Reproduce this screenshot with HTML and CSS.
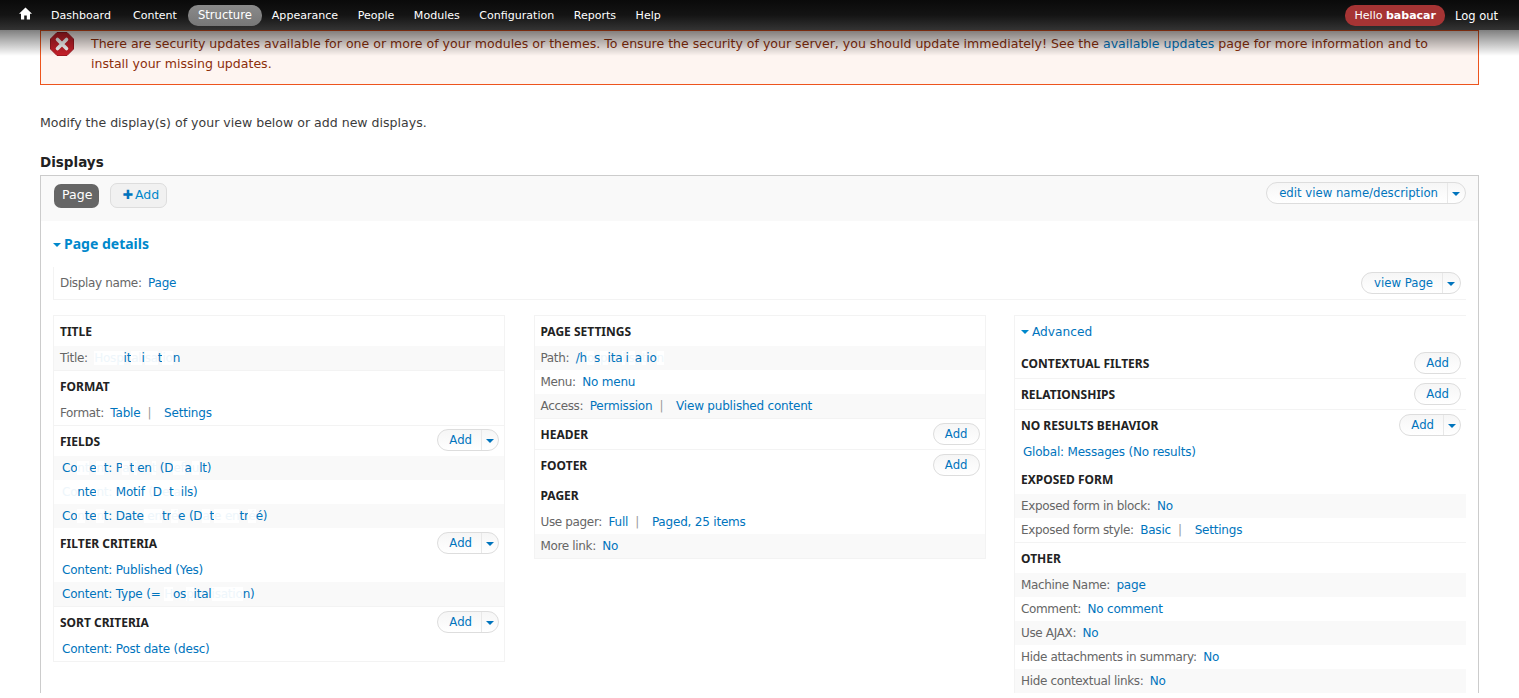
FILE: index.html
```html
<!DOCTYPE html>
<html>
<head>
  <title>Edit view</title>
  <link rel="stylesheet" href="styles.css">
</head>
<body>
<div class="toolbar">
  <a class="home" href="#"><svg width="13" height="13" viewBox="0 0 13 13"><path d="M6.5 .5 L13 6.8 H11 V12.5 H7.8 V8.5 H5.2 V12.5 H2 V6.8 H0 Z" fill="#fff"/></svg></a>
  <a class="first" href="#">Dashboard</a>
  <a href="#">Content</a>
  <a class="active" href="#">Structure</a>
  <a href="#">Appearance</a>
  <a href="#">People</a>
  <a href="#">Modules</a>
  <a href="#">Configuration</a>
  <a href="#">Reports</a>
  <a href="#">Help</a>
  <a class="hello" href="#">Hello <b>babacar</b></a>
  <a class="logout" href="#">Log out</a>
</div>

<div class="message">
  <svg class="message-icon" width="24" height="24" viewBox="0 0 24 24">
    <path d="M7 .5 H17 L23.5 7 V17 L17 23.5 H7 L.5 17 V7 Z" fill="#c8202a" stroke="#a01820"/>
    <path d="M7.5 7.5 L16.5 16.5 M16.5 7.5 L7.5 16.5" stroke="#fff" stroke-width="3.6" stroke-linecap="round"/>
  </svg>
  <p>There are security updates available for one or more of your modules or themes. To ensure the security of your server, you should update immediately! See the <a href="#">available updates</a> page for more information and to<br>install your missing updates.</p>
</div>

<p class="intro">Modify the display(s) of your view below or add new displays.</p>
<h2 class="displays">Displays</h2>

<div class="panel">
  <div class="panel-head">
    <a class="tab-page" href="#">Page</a>
    <a class="tab-add" href="#"><span class="plus">✚</span>Add</a>
    <a class="btn btn-edit" href="#"><span>edit view name/description</span><i class="caret"></i></a>
  </div>

  <div class="panel-body">
    <a class="details-title" href="#"><i class="arrow"></i>Page details</a>
    <div class="display-name">
      <div class="label">Display name: <a href="#">Page</a></div>
      <a class="btn btn-view" href="#"><span>view Page</span><i class="caret"></i></a>
    </div>

    <div class="columns">
      <div class="column">
        <div class="section">
          <div class="section-head"><h3>TITLE</h3></div>
          <div class="row odd">Title: <a href="#"><i class="rub">Hosp</i>it<i class="rub">al</i>i<i class="rub">sa</i>t<i class="rub">io</i>n</a></div>
        </div>
        <div class="section">
          <div class="section-head"><h3>FORMAT</h3></div>
          <div class="row">Format: <a href="#">Table</a><span class="sep">|</span><a href="#">Settings</a></div>
        </div>
        <div class="section flat">
          <div class="section-head"><h3>FIELDS</h3><a class="btn btn-add btn-up" href="#"><span>Add</span><i class="caret"></i></a></div>
          <div class="row field odd"><a href="#">Co<i class="rub">nt</i>e<i class="rub">n</i>t: P<i class="rub">a</i>t<i class="rub">i</i>en<i class="rub">t</i> (D<i class="rub">ef</i>a<i class="rub">u</i>lt)</a></div>
          <div class="row field"><a href="#"><i class="rub">Co</i>nte<i class="rub">nt: </i>Motif <i class="rub">(</i>D<i class="rub">e</i>t<i class="rub">a</i>ils)</a></div>
          <div class="row field odd"><a href="#">Co<i class="rub">n</i>te<i class="rub">n</i>t: Date<i class="rub"> en</i>tr<i class="rub">é</i>e (D<i class="rub">a</i>t<i class="rub">e en</i>tr<i class="rub">é</i>é)</a></div>
        </div>
        <div class="section">
          <div class="section-head"><h3>FILTER CRITERIA</h3><a class="btn btn-add" href="#"><span>Add</span><i class="caret"></i></a></div>
          <div class="row field"><a href="#">Content: Published (Yes)</a></div>
          <div class="row field odd"><a href="#">Content: Type (= <i class="rub">H</i>os<i class="rub">p</i>ital<i class="rub">isatio</i>n)</a></div>
        </div>
        <div class="section last">
          <div class="section-head"><h3>SORT CRITERIA</h3><a class="btn btn-add" href="#"><span>Add</span><i class="caret"></i></a></div>
          <div class="row field"><a href="#">Content: Post date (desc)</a></div>
        </div>
      </div>

      <div class="column">
        <div class="section">
          <div class="section-head"><h3>PAGE SETTINGS</h3></div>
          <div class="row odd">Path: <a href="#">/h<i class="rub">o</i>s<i class="rub">p</i>ita<i class="rub">l</i>i<i class="rub">s</i>a<i class="rub">t</i>io<i class="rub">n</i></a></div>
          <div class="row">Menu: <a href="#">No menu</a></div>
          <div class="row odd">Access: <a href="#">Permission</a><span class="sep">|</span><a href="#">View published content</a></div>
        </div>
        <div class="section">
          <div class="section-head"><h3>HEADER</h3><a class="btn btn-single" href="#"><span>Add</span></a></div>
        </div>
        <div class="section flat">
          <div class="section-head"><h3>FOOTER</h3><a class="btn btn-single" href="#"><span>Add</span></a></div>
        </div>
        <div class="section last">
          <div class="section-head"><h3>PAGER</h3></div>
          <div class="row">Use pager: <a href="#">Full</a><span class="sep">|</span><a href="#">Paged, 25 items</a></div>
          <div class="row odd">More link: <a href="#">No</a></div>
        </div>
      </div>

      <div class="column column-open">
        <a class="advanced" href="#"><i class="arrow"></i>Advanced</a>
        <div class="section">
          <div class="section-head"><h3>CONTEXTUAL FILTERS</h3><a class="btn btn-single" href="#"><span>Add</span></a></div>
        </div>
        <div class="section">
          <div class="section-head"><h3>RELATIONSHIPS</h3><a class="btn btn-single" href="#"><span>Add</span></a></div>
        </div>
        <div class="section flat">
          <div class="section-head"><h3>NO RESULTS BEHAVIOR</h3><a class="btn btn-add" href="#"><span>Add</span><i class="caret"></i></a></div>
          <div class="row field"><a href="#">Global: Messages (No results)</a></div>
        </div>
        <div class="section">
          <div class="section-head"><h3>EXPOSED FORM</h3></div>
          <div class="row odd">Exposed form in block: <a href="#">No</a></div>
          <div class="row">Exposed form style: <a href="#">Basic</a><span class="sep">|</span><a href="#">Settings</a></div>
        </div>
        <div class="section flat">
          <div class="section-head"><h3>OTHER</h3></div>
          <div class="row odd">Machine Name: <a href="#">page</a></div>
          <div class="row">Comment: <a href="#">No comment</a></div>
          <div class="row odd">Use AJAX: <a href="#">No</a></div>
          <div class="row">Hide attachments in summary: <a href="#">No</a></div>
          <div class="row odd">Hide contextual links: <a href="#">No</a></div>
        </div>
      </div>
    </div>
  </div>
</div>
</body>
</html>
```

FILE: styles.css
```css
html, body {
  height: 100%;
  overflow: hidden;
}

body {
  margin: 0;
  background: #fff;
  color: #3b3b3b;
  font-family: "DejaVu Sans", sans-serif;
  font-size: 12.55px;
  line-height: 20px;
}

a {
  color: #0074bd;
  text-decoration: none;
}

/* toolbar */
.toolbar {
  position: relative;
  z-index: 2;
  display: flex;
  align-items: center;
  height: 30px;
  padding: 2px 21px 0 19px;
  box-sizing: border-box;
  background: linear-gradient(#0a0a0a, #141414 50%, #333);
  font-size: 11.05px;
}

.toolbar::after {
  content: "";
  position: absolute;
  left: 0;
  right: 0;
  top: 30px;
  height: 26px;
  background: linear-gradient(rgba(0, 0, 0, .5), rgba(0, 0, 0, 0));
  pointer-events: none;
}

.toolbar a {
  color: #fff;
  margin-right: 19.5px;
  white-space: nowrap;
}

.toolbar .home {
  display: flex;
  margin-right: 19px;
  margin-top: -6px;
}

.toolbar .first {
  margin-right: 22px;
}

.toolbar .active {
  height: 21px;
  line-height: 21px;
  padding: 0 10px;
  margin: -2px 10px 0 -8.5px;
  border-radius: 10px;
  background: linear-gradient(#8a8a8a, #777);
  font-size: 11.6px;
}

.toolbar .hello {
  height: 21px;
  line-height: 21px;
  padding: 0 9px;
  margin: -2px 10px 0 auto;
  border-radius: 10px;
  background: #a63434;
}

.toolbar .hello b {
  font-size: 11px;
}

.toolbar .logout {
  margin-right: 0;
  font-size: 11.5px;
}

/* message */
.message {
  display: flex;
  gap: 17px;
  margin: 0 40px;
  padding: 3px 40px 10px 9px;
  background: #fef5f1;
  border: 1px solid #ed541d;
  color: #8c2e0b;
}

.message-icon {
  flex: none;
  margin-top: -2px;
}

.message p {
  margin: 0;
}

.intro {
  margin: 28px 40px 0;
}

.displays {
  margin: 19px 40px 3px;
  font-size: 13.5px;
  line-height: 20px;
  color: #222;
}

/* panel */
.panel {
  margin: 0 40px;
  border: 1px solid #ccc;
  border-bottom: 0;
}

.panel-head {
  display: flex;
  align-items: flex-start;
  height: 45px;
  padding: 8px 12px 0 13px;
  box-sizing: border-box;
  background: #f9f9f9;
}

.tab-page {
  height: 24px;
  line-height: 22px;
  padding: 0 7px 0 8px;
  border-radius: 7px;
  background: #666;
  color: #fff;
}

.tab-add {
  height: 23px;
  line-height: 22px;
  margin: -1px 0 0 11px;
  padding: 0 7px 0 11px;
  border: 1px solid #ddd;
  border-radius: 7px;
  background: #f1f1f1;
  color: #0088cc;
}

.plus {
  margin-right: 2px;
  color: #0074bd;
}

/* drop buttons */
.btn {
  display: flex;
  align-items: center;
  height: 20px;
  border: 1px solid #ddd;
  border-radius: 11px;
  background: linear-gradient(#f6f6f6, #fff);
  font-size: 11.7px;
  line-height: 18px;
  box-sizing: content-box;
  flex: none;
}

.btn span {
  padding: 0 9px 0 12px;
}

.caret {
  align-self: stretch;
  position: relative;
  width: 17px;
  border-left: 1px solid #e8e8e8;
}

.caret::after {
  content: "";
  position: absolute;
  left: 4px;
  top: 9px;
  border: 4px solid transparent;
  border-top-color: #0074bd;
  border-bottom: 0;
}

.btn-edit {
  margin: -2px 0 0 auto;
}

.btn-view, .btn-add, .btn-single {
  margin-right: 5px;
}

.btn-add span {
  padding: 0 9px 0 11px;
}

.btn-add .caret {
  width: 16px;
}

.btn-single span {
  padding: 0 11px;
}

/* panel body */
.panel-body {
  padding: 13px 12px 0;
}

.arrow {
  display: inline-block;
  margin-right: 3px;
  vertical-align: 2px;
  border: 4.5px solid transparent;
  border-top-color: #0088cc;
  border-bottom: 0;
}

.details-title {
  display: block;
  font-family: "Noto Sans", sans-serif;
  font-size: 14px;
  font-weight: bold;
  color: #0088cc;
}

.display-name {
  display: flex;
  align-items: center;
  justify-content: space-between;
  height: 32px;
  margin-top: 13px;
  padding-left: 6px;
  border-left: 1px solid #f3f3f3;
  border-bottom: 1px solid #f3f3f3;
}

.label {
  color: #666;
  font-size: 12px;
  letter-spacing: -.35px;
}

.label a, .row a {
  margin-left: 3px;
  letter-spacing: -.2px;
}

.columns {
  display: grid;
  grid-template-columns: repeat(3, 1fr);
  gap: 28.5px;
  align-items: start;
  margin-top: 15px;
}

.column {
  border: 1px solid #f3f3f3;
}

.column-open {
  border-right: 0;
  border-bottom: 0;
}

.advanced {
  display: block;
  height: 32px;
  line-height: 32px;
  padding-left: 6px;
  font-size: 12.2px;
}

.section {
  border-bottom: 1px solid #f3f3f3;
}

.section.flat, .section.last {
  border-bottom: 0;
}

.section-head {
  display: flex;
  justify-content: space-between;
  align-items: flex-start;
  height: 30px;
  padding-left: 6px;
}

.section-head h3 {
  margin: 0;
  font-family: "Noto Sans", sans-serif;
  font-size: 12px;
  line-height: 31px;
  color: #222;
}

.section-head .btn {
  margin-top: 4px;
}

.section-head .btn-up {
  margin-top: 3px;
}

.row {
  height: 24px;
  line-height: 24px;
  padding-left: 6px;
  color: #666;
  font-size: 12px;
  letter-spacing: -.35px;
}

.row.odd {
  background: #f9f9f9;
}

.row.field {
  padding-left: 8px;
}

.row.field a {
  margin-left: 0;
}

.sep {
  margin: 0 10px 0 7px;
  color: #999;
}

.rub {
  font-style: normal;
  background: #fff;
  color: #eef6fb;
}
```
